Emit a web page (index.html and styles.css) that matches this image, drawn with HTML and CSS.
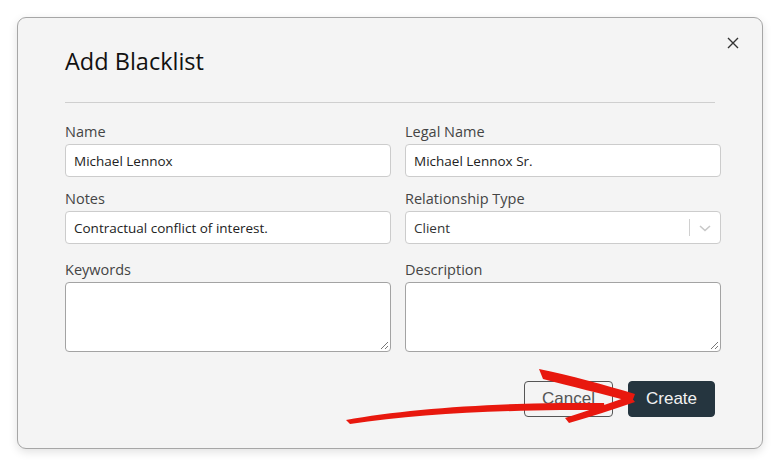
FILE: index.html
```html
<!DOCTYPE html>
<html>
<head>
<meta charset="utf-8">
<link rel="stylesheet" href="styles.css">
</head>
<body>
<div class="dialog">
  <button class="close" aria-label="Close">
    <svg width="12" height="12" viewBox="0 0 12 12"><path d="M1 1 L11 11 M11 1 L1 11" stroke="#333" stroke-width="1.4" fill="none"/></svg>
  </button>
  <h1 class="title">Add Blacklist</h1>
  <div class="sep"></div>
  <div class="form">
    <div class="field">
      <label class="label">Name</label>
      <div class="input">Michael Lennox</div>
    </div>
    <div class="field">
      <label class="label">Legal Name</label>
      <div class="input">Michael Lennox Sr.</div>
    </div>
    <div class="field">
      <label class="label">Notes</label>
      <div class="input">Contractual conflict of interest.</div>
    </div>
    <div class="field">
      <label class="label">Relationship Type</label>
      <div class="input select">
        <span class="sel-value">Client</span>
        <span class="sel-ind">
          <span class="sel-bar"></span>
          <svg width="14" height="10" viewBox="0 0 14 10"><path d="M2 3 L7 7.5 L12 3" stroke="#c8c8c8" stroke-width="1.6" fill="none"/></svg>
        </span>
      </div>
    </div>
    <div class="field field-tall">
      <label class="label">Keywords</label>
      <div class="textarea"><span class="grip"></span></div>
    </div>
    <div class="field field-tall">
      <label class="label">Description</label>
      <div class="textarea"><span class="grip"></span></div>
    </div>
  </div>
  <div class="actions">
    <button class="btn btn-cancel">Cancel</button>
    <button class="btn btn-create">Create</button>
  </div>
  <svg class="arrow" width="779" height="465" viewBox="0 0 779 465">
    <path d="M346 420 C 400 410 480 404 560 403 L 604 403 L 605 410 L 560 410 C 480 411 410 415 350 424 Z" fill="#e8180e"/>
    <path d="M539 369 C 570 375 605 385 635 394 L 632 402 C 603 394 570 386 543 379 Z" fill="#e8180e"/>
    <path d="M630 396 L 635 402 C 612 410 590 417 569 423 L 565 418 C 588 411 609 403 630 396 Z" fill="#e8180e"/>
  </svg>
</div>
</body>
</html>
```
FILE: styles.css
```css
html, body {
  margin: 0;
  padding: 0;
  background: #ffffff;
}
body {
  width: 779px;
  height: 465px;
  overflow: hidden;
  font-family: "Open Sans", "Noto Sans", sans-serif;
}
.dialog {
  position: relative;
  box-sizing: border-box;
  margin: 17px 0 0 17px;
  width: 746px;
  height: 432px;
  background: #f4f4f4;
  border: 1px solid #a6a6a6;
  border-radius: 9px;
  box-shadow: 0 3px 10px rgba(0, 0, 0, 0.12);
  padding: 27px 0 0 47px;
}
.close {
  position: absolute;
  top: 19px;
  right: 23px;
  border: 0;
  background: transparent;
  padding: 0;
  width: 12px;
  height: 12px;
  display: flex;
}
.title {
  margin: 0;
  font-size: 23.5px;
  font-weight: 400;
  line-height: 32px;
  color: #111;
}
.sep {
  margin-top: 25px;
  width: 650px;
  height: 1px;
  background: #cfcfcf;
}
.form {
  margin-top: 19px;
  display: grid;
  grid-template-columns: 326px 316px;
  column-gap: 14px;
  row-gap: 12px;
}
.field {
  display: flex;
  flex-direction: column;
  gap: 2px;
}
.field-tall {
  margin-top: 4px;
}
.label {
  font-size: 14.5px;
  line-height: 20px;
  color: #444;
}
.input {
  box-sizing: border-box;
  height: 33px;
  background: #fff;
  border: 1px solid #cccccc;
  border-radius: 4px;
  padding: 0 8px;
  display: flex;
  align-items: center;
  font-size: 13.5px;
  color: #222;
}
.select {
  justify-content: space-between;
  padding-right: 8px;
}
.sel-value {
  color: #333;
}
.sel-ind {
  display: flex;
  align-items: center;
  gap: 8px;
}
.sel-bar {
  width: 1px;
  height: 17px;
  background: #d0d0d0;
}
.textarea {
  position: relative;
  box-sizing: border-box;
  height: 70px;
  background: #fff;
  border: 1px solid #a3a3a3;
  border-radius: 4px;
}
.grip {
  position: absolute;
  right: 2px;
  bottom: 2px;
  width: 7px;
  height: 7px;
  background: linear-gradient(135deg, transparent 45%, #777 45%, #777 55%, transparent 55%, transparent 75%, #777 75%, #777 85%, transparent 85%);
}
.actions {
  margin-top: 29px;
  width: 650px;
  display: flex;
  justify-content: flex-end;
  gap: 15px;
}
.btn {
  box-sizing: border-box;
  height: 36px;
  border-radius: 4px;
  font-family: "Liberation Sans", Arial, sans-serif;
  font-size: 17px;
  padding: 0;
}
.btn-cancel {
  width: 89px;
  background: transparent;
  border: 1px solid #555;
  color: #555;
}
.btn-create {
  width: 87px;
  background: #25353f;
  border: 1px solid #25353f;
  color: #f2f2f2;
}
.arrow {
  position: absolute;
  left: -18px;
  top: -18px;
  pointer-events: none;
}
```
